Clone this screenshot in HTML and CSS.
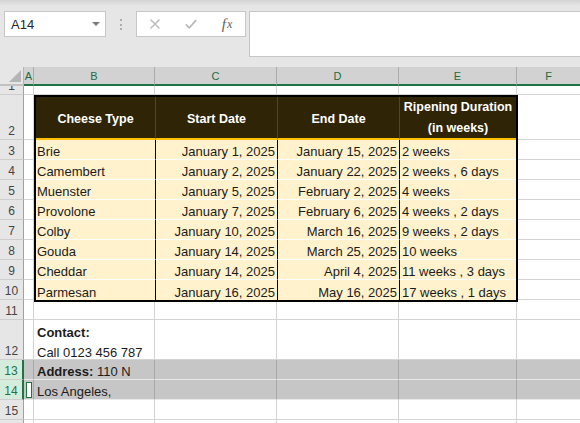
FILE: index.html
```html
<!DOCTYPE html>
<html>
<head>
<meta charset="utf-8">
<title>Cheese Ripening</title>
<link rel="stylesheet" href="styles.css">
</head>
<body>
<div class="topbar">
  <div class="namebox"><span class="ref">A14</span><span class="caret"></span></div>
  <div class="grip"><i></i><i></i><i></i></div>
  <div class="fbtns">
    <span class="fbtn"><svg width="12" height="12" viewBox="0 0 12 12"><path d="M1.5 1.5L10.5 10.5M10.5 1.5L1.5 10.5" stroke="#b8b8b8" stroke-width="1.4" fill="none"/></svg></span>
    <span class="fbtn"><svg width="14" height="12" viewBox="0 0 14 12"><path d="M1 6.5L5 10.5L13 1.5" stroke="#b8b8b8" stroke-width="2" fill="none"/></svg></span>
    <span class="fbtn fx"><i>f</i><i class="x">x</i></span>
  </div>
  <div class="fbar"></div>
</div>

<div class="sheet">
  <div class="corner"><svg width="12" height="12" viewBox="0 0 12 12"><polygon points="0,12 12,0 12,12" fill="#b5b5b5"/></svg></div>
  <div class="ch">A</div><div class="ch">B</div><div class="ch">C</div><div class="ch">D</div><div class="ch">E</div><div class="ch">F</div>

  <div class="rh">1</div><div class="c"></div><div class="c"></div><div class="c"></div><div class="c"></div><div class="c"></div><div class="c"></div>
  <div class="rh">2</div><div class="c"></div><div class="c"></div>
  <div class="rh">3</div><div class="c"></div><div class="c"></div>
  <div class="rh">4</div><div class="c"></div><div class="c"></div>
  <div class="rh">5</div><div class="c"></div><div class="c"></div>
  <div class="rh">6</div><div class="c"></div><div class="c"></div>
  <div class="rh">7</div><div class="c"></div><div class="c"></div>
  <div class="rh">8</div><div class="c"></div><div class="c"></div>
  <div class="rh">9</div><div class="c"></div><div class="c"></div>
  <div class="rh">10</div><div class="c"></div><div class="c"></div>
  <div class="rh">11</div><div class="c"></div><div class="c"></div><div class="c"></div><div class="c"></div><div class="c"></div><div class="c"></div>
  <div class="rh">12</div><div class="c"></div><div class="c contact"><div><b>Contact:</b></div><div>Call 0123 456 787</div></div><div class="c"></div><div class="c"></div><div class="c"></div><div class="c"></div>
  <div class="rh s">13</div><div class="c g"></div><div class="c g"><b>Address:</b>&nbsp;110 N</div><div class="c g"></div><div class="c g"></div><div class="c g"></div><div class="c g"></div>
  <div class="rh s">14</div><div class="c g active"><span class="cursor"></span></div><div class="c g">Los Angeles,</div><div class="c g"></div><div class="c g"></div><div class="c g"></div><div class="c g"></div>
  <div class="rh">15</div><div class="c"></div><div class="c"></div><div class="c"></div><div class="c"></div><div class="c"></div><div class="c"></div>
  <div class="rh"></div><div class="c"></div><div class="c"></div><div class="c"></div><div class="c"></div><div class="c"></div><div class="c"></div>

  <div class="tbl">
    <div class="th">Cheese Type</div><div class="th">Start Date</div><div class="th">End Date</div><div class="th two">Ripening Duration<br>(in weeks)</div>

    <div class="td">Brie</div><div class="td r">January 1, 2025</div><div class="td r">January 15, 2025</div><div class="td e">2 weeks</div>
    <div class="td">Camembert</div><div class="td r">January 2, 2025</div><div class="td r">January 22, 2025</div><div class="td e">2 weeks , 6 days</div>
    <div class="td">Muenster</div><div class="td r">January 5, 2025</div><div class="td r">February 2, 2025</div><div class="td e">4 weeks</div>
    <div class="td">Provolone</div><div class="td r">January 7, 2025</div><div class="td r">February 6, 2025</div><div class="td e">4 weeks , 2 days</div>
    <div class="td">Colby</div><div class="td r">January 10, 2025</div><div class="td r">March 16, 2025</div><div class="td e">9 weeks , 2 days</div>
    <div class="td">Gouda</div><div class="td r">January 14, 2025</div><div class="td r">March 25, 2025</div><div class="td e">10 weeks</div>
    <div class="td">Cheddar</div><div class="td r">January 14, 2025</div><div class="td r">April 4, 2025</div><div class="td e">11 weeks , 3 days</div>
    <div class="td lr">Parmesan</div><div class="td r lr">January 16, 2025</div><div class="td r lr">May 16, 2025</div><div class="td e lr">17 weeks , 1 days</div>
  </div>
</div>
</body>
</html>
```

FILE: styles.css
```css
* { box-sizing: border-box; margin: 0; padding: 0; }

html, body { width: 580px; height: 423px; overflow: hidden; }

body {
  background: #e6e6e6;
  font-family: "Liberation Sans", Arial, sans-serif;
  font-size: 13px;
  color: #222;
}

/* ---------- formula bar area ---------- */
.topbar {
  height: 67px;
  display: flex;
  align-items: flex-start;
  padding: 11px 0 0 4px;
  background: linear-gradient(#d4d4d4 0, #e6e6e6 6px);
}

.namebox {
  width: 102px;
  height: 26px;
  background: #fff;
  border: 1px solid #c6c6c6;
  display: flex;
  align-items: center;
  justify-content: space-between;
  padding: 0 5px 0 6px;
}

.ref { font-size: 13px; color: #262626; }

.caret {
  width: 0;
  height: 0;
  border-left: 4px solid transparent;
  border-right: 4px solid transparent;
  border-top: 4px solid #7a7a7a;
}

.grip {
  width: 30px;
  display: flex;
  flex-direction: column;
  align-items: center;
  gap: 2.5px;
  padding-top: 8px;
}

.grip i { display: block; width: 2px; height: 2px; background: #adadad; }

.fbtns {
  width: 110px;
  height: 26px;
  background: #fff;
  border: 1px solid #c6c6c6;
  display: flex;
  align-items: center;
  padding-left: 12px;
  gap: 24px;
}

.fbtn {
  width: 12px;
  display: flex;
  justify-content: center;
  align-items: center;
}

.fx {
  font-family: "Liberation Serif", "Times New Roman", serif;
  color: #606060;
  font-size: 15px;
  white-space: nowrap;
}

.fx i { font-style: italic; }
.fx .x { font-size: 12px; margin-left: 1px; }

.fbar {
  flex: 1;
  margin-left: 3px;
  height: 46px;
  background: #fff;
  border: 1px solid #c6c6c6;
  border-right: none;
}

/* ---------- sheet grid ---------- */
.sheet {
  display: grid;
  grid-template-columns: 24px 10px 121px 122px 122px 118px 64px;
  grid-template-rows: 19px 9px 45px repeat(8, 20px) 20px 40px repeat(4, 20px);
  width: 581px;
  background: #fff;
}

.corner {
  background: #e6e6e6;
  border-right: 1px solid #b4b4b4;
  border-bottom: 2px solid #c2c2c2;
  display: flex;
  align-items: flex-end;
  justify-content: flex-end;
  padding: 0 2px 2px 0;
}

.ch {
  background: #d2d2d2;
  border-right: 1px solid #ababab;
  border-bottom: 2px solid #217346;
  color: #1e6a42;
  font-size: 11px;
  display: flex;
  align-items: center;
  justify-content: center;
}

.rh {
  background: #e6e6e6;
  border-right: 1px solid #a0a0a0;
  border-bottom: 1px solid #cdcdcd;
  color: #444;
  font-size: 12px;
  line-height: 15px;
  display: flex;
  align-items: flex-end;
  justify-content: center;
  overflow: hidden;
}

.rh.s {
  background: #d3ecdc;
  color: #217346;
  border-right: 2px solid #217346;
}

.c {
  border-right: 1px solid #d4d4d4;
  border-bottom: 1px solid #d4d4d4;
  line-height: 15px;
  display: flex;
  align-items: flex-end;
  padding-left: 3px;
  white-space: nowrap;
  color: #1c1c1c;
}

.c.contact {
  display: block;
  line-height: 20px;
  padding-top: 3px;
}

.c.g {
  background: #c6c6c6;
  border-right-color: #a8a8a8;
  border-bottom-color: #e9e9e9;
}

.c.active {
  padding: 2px 1px 1px 2px;
  align-items: stretch;
}

.cursor {
  display: block;
  width: 6px;
  background: #fff;
  border: 1px solid #217346;
}

/* ---------- formatted table ---------- */
.tbl {
  grid-column: 3 / 7;
  grid-row: 3 / 12;
  margin: 0 -1px -2px 0;
  border: 2px solid #000;
  z-index: 1;
  display: grid;
  grid-template-columns: 120px 122px 122px 116px;
  grid-template-rows: 43px repeat(8, 20px);
  background: #fff2cc;
}

.th {
  background: #2f2506;
  color: #fff;
  font-weight: bold;
  font-size: 12.5px;
  line-height: 21px;
  text-align: center;
  display: flex;
  align-items: center;
  justify-content: center;
  padding-top: 4px;
  border-right: 1px solid #55471a;
  border-bottom: 2px solid #ffc000;
  white-space: nowrap;
}

.th.two { padding-top: 0; border-right: none; }

.td {
  background: #fff2cc;
  border-right: 1px solid #000;
  border-bottom: 1px solid #fff;
  line-height: 15px;
  display: flex;
  align-items: flex-end;
  padding: 0 2px 0 1px;
  white-space: nowrap;
  color: #1c1c1c;
}

.td.r { justify-content: flex-end; }
.td.e { border-right: none; padding-left: 2px; }
.td.lr { border-bottom: none; }
```
